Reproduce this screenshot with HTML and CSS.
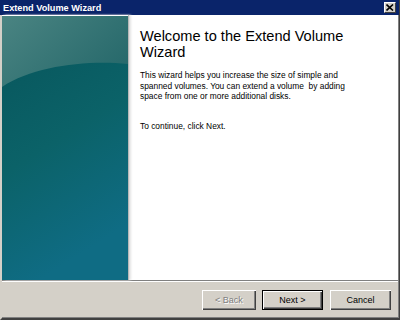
FILE: index.html
```html
<!DOCTYPE html>
<html lang="en">
<head>
    <meta charset="UTF-8">
    <title>Extend Volume Wizard</title>
    <link rel="stylesheet" href="styles.css">
</head>
<body>
    <div class="window">
        <div class="titlebar">
            <span class="caption">Extend Volume Wizard</span>
            <span class="close">
                <svg width="8" height="7" viewBox="0 0 8 7"><path d="M0.5 0.5 L7 6.5 M7 0.5 L0.5 6.5" stroke="#000" stroke-width="1.6"/></svg>
            </span>
        </div>
        <div class="main">
            <div class="banner">
                <svg width="126" height="264" viewBox="0 0 126 264" preserveAspectRatio="none">
                    <defs>
                        <linearGradient id="bg" x1="0" y1="0" x2="0.3" y2="1">
                            <stop offset="0" stop-color="#07545a"/>
                            <stop offset="0.55" stop-color="#0b6268"/>
                            <stop offset="1" stop-color="#0f6c84"/>
                        </linearGradient>
                        <linearGradient id="gloss" x1="0" y1="0" x2="1" y2="0.6">
                            <stop offset="0" stop-color="#4a8482"/>
                            <stop offset="1" stop-color="#286a6c"/>
                        </linearGradient>
                    </defs>
                    <rect width="126" height="264" fill="url(#bg)"/>
                    <path d="M0 0 H126 V48 C84 44 32 50 0 71 Z" fill="url(#gloss)"/>
                </svg>
            </div>
            <div class="content">
                <h1 class="heading">Welcome to the Extend Volume Wizard</h1>
                <p class="text">This wizard helps you increase the size of simple and spanned volumes. You can extend a volume&nbsp; by adding space from one or more additional disks.</p>
                <p class="text next-hint">To continue, click Next.</p>
            </div>
        </div>
        <div class="footer">
            <button class="btn back" disabled>&lt; Back</button>
            <button class="btn default">Next &gt;</button>
            <button class="btn cancel">Cancel</button>
        </div>
    </div>
</body>
</html>
```

FILE: styles.css
```css
body {
    margin: 0;
    padding: 0;
    background: #d4d0c8;
    font-family: 'Liberation Sans', Arial, sans-serif;
}
.window {
    width: 400px;
    height: 320px;
    box-sizing: border-box;
    display: flex;
    flex-direction: column;
    background: #d4d0c8;
    border-left: 2px solid #d4d0c8;
    border-right: 1px solid #404040;
    border-bottom: 2px solid #404040;
    box-shadow: inset -1px -1px 0 #808080;
}
.titlebar {
    height: 15px;
    margin-left: -2px;
    padding: 0 3px 0 3px;
    display: flex;
    align-items: center;
    justify-content: space-between;
    background: #0a246a;
    color: #fff;
}
.caption {
    font-family: 'Liberation Sans', Arial, sans-serif;
    font-weight: bold;
    font-size: 9.2px;
}
.close {
    width: 12px;
    height: 11px;
    box-sizing: border-box;
    display: flex;
    align-items: center;
    justify-content: center;
    background: #d4d0c8;
    border-top: 1px solid #fff;
    border-left: 1px solid #fff;
    border-right: 1px solid #404040;
    border-bottom: 1px solid #404040;
}
.main {
    display: flex;
    height: 265px;
    border-bottom: 1px solid #808080;
    box-shadow: 0 1px 0 #fff;
    background: #fff;
    margin-right: 1px;
}
.banner {
    width: 126px;
    flex: none;
    padding-top: 1px;
    background: #fff;
    box-shadow: 1px 0 1px #b8b8b8, 3px 0 2px #e4e4e4;
}
.banner svg {
    display: block;
    height: 264px;
}
.content {
    flex: 1;
    padding: 0 10px 0 12px;
    color: #000;
}
.heading {
    margin: 13px 0 10px 0;
    font-size: 14.6px;
    font-weight: normal;
    line-height: 16px;
    width: 215px;
}
.text {
    margin: 0;
    font-size: 8.4px;
    line-height: 10.7px;
    width: 205px;
}
.next-hint {
    margin-top: 19px;
}
.footer {
    flex: 1;
    display: flex;
    align-items: center;
    justify-content: flex-end;
    gap: 6px;
    padding-right: 8px;
    margin-top: 1px;
}
.btn {
    width: 61px;
    height: 20px;
    padding: 0;
    font-family: 'Liberation Sans', Arial, sans-serif;
    font-size: 9px;
    color: #000;
    background: #d4d0c8;
    border: none;
    box-shadow: inset 1px 1px 0 #fff, inset -1px -1px 0 #404040, inset -2px -2px 0 #808080;
}
.back {
    width: 54px;
}
.btn:disabled {
    color: #808080;
    text-shadow: 1px 1px 0 #fff;
}
.default {
    box-shadow: inset 0 0 0 1px #000, inset 2px 2px 0 #fff, inset -2px -2px 0 #404040, inset -3px -3px 0 #808080;
}
.cancel {
    margin-left: 1px;
}
```
